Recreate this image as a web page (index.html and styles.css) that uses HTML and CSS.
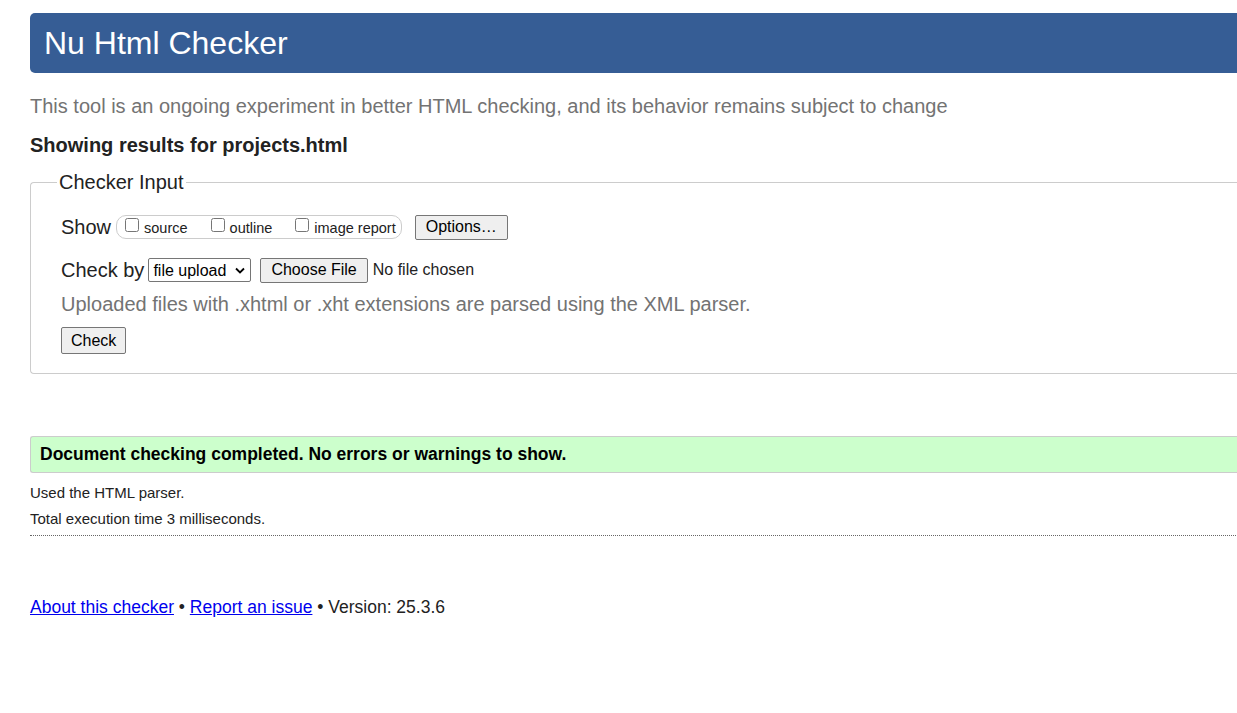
FILE: index.html
```html
<!DOCTYPE html>
<html lang="en">
<head>
<meta charset="utf-8">
<title>Showing results for projects.html - Nu Html Checker</title>
<link rel="stylesheet" href="styles.css">
</head>
<body>
<div class="page">
  <h1 class="banner">Nu Html Checker</h1>
  <p class="intro">This tool is an ongoing experiment in better HTML checking, and its behavior remains subject to change</p>
  <p class="showing">Showing results for projects.html</p>
  <fieldset class="input-box">
    <legend class="input-legend">Checker Input</legend>
    <div class="row">
      <span class="row-label">Show</span>
      <span class="show-group">
        <label class="opt"><input type="checkbox"> source</label>
        <label class="opt"><input type="checkbox"> outline</label>
        <label class="opt"><input type="checkbox"> image report</label>
      </span>
      <button class="btn btn-options" type="button">Options…</button>
    </div>
    <div class="row row-check">
      <span class="row-label">Check by</span>
      <span class="sel-wrap">
        <select class="sel"><option>file upload</option></select>
        <svg class="sel-arrow" width="10" height="7" viewBox="0 0 10 7" aria-hidden="true"><path d="M1 1.5 L5 5.5 L9 1.5" fill="none" stroke="#000" stroke-width="1.8"/></svg>
      </span>
      <button class="btn btn-file" type="button">Choose File</button>
      <span class="nofile">No file chosen</span>
    </div>
    <p class="hint">Uploaded files with .xhtml or .xht extensions are parsed using the XML parser.</p>
    <button class="btn btn-check" type="button">Check</button>
  </fieldset>
  <p class="success">Document checking completed. No errors or warnings to show.</p>
  <p class="meta">Used the HTML parser.</p>
  <p class="meta">Total execution time 3 milliseconds.</p>
  <hr class="sep">
  <p class="footer"><a href="#">About this checker</a> • <a href="#">Report an issue</a> • Version: 25.3.6</p>
</div>
</body>
</html>
```

FILE: styles.css
```css
html, body {
  margin: 0;
  padding: 0;
  overflow: hidden;
  background: #fff;
}
body {
  font-family: "Liberation Sans", Arial, sans-serif;
  color: #222;
}
.page {
  width: 1400px;
  padding: 13px 0 0 30px;
}
.banner {
  margin: 0;
  height: 60px;
  line-height: 60px;
  background: #365d95;
  color: #fff;
  font-weight: normal;
  font-size: 32px;
  padding-left: 14px;
  border-radius: 5px 0 0 5px;
}
.intro {
  margin: 21px 0 0;
  font-size: 20px;
  line-height: 24px;
  color: #737373;
}
.showing {
  margin: 15px 0 0;
  font-size: 20px;
  line-height: 24px;
  font-weight: bold;
  color: #222;
}
.input-box {
  margin: 14px 0 0;
  border: 1px solid #ccc;
  border-radius: 4px 0 0 4px;
  border-right: none;
  padding: 10px 30px 19px 30px;
  min-width: 0;
}
.input-legend {
  font-size: 20px;
  padding: 0 2px;
  margin-left: -4px;
  color: #222;
}
.row {
  display: flex;
  align-items: center;
  margin-top: 10px;
  height: 26px;
}
.row-check {
  margin-top: 17px;
}
.row-label {
  font-size: 20px;
  margin-right: 5px;
  color: #222;
}
.show-group {
  display: inline-flex;
  align-items: center;
  border: 1px solid #ccc;
  border-radius: 10px;
  height: 22px;
  padding: 0 5px 0 8px;
  gap: 23px;
}
.opt {
  font-size: 14.5px;
  display: inline-flex;
  align-items: center;
  color: #222;
  position: relative;
  top: 1px;
}
.opt input {
  margin: 0 5px 0 0;
  width: 14px;
  height: 14px;
  position: relative;
  top: -3px;
}
.btn {
  font-family: "Liberation Sans", Arial, sans-serif;
  font-size: 16px;
  color: #000;
  background: #efefef;
  border: 1px solid #767676;
  border-radius: 2px;
  padding: 0 9px;
  height: 25px;
}
.btn-options {
  margin-left: 13px;
  padding: 0 10px;
}
.sel-wrap {
  position: relative;
  display: inline-flex;
  margin-left: -1px;
}
.sel {
  -webkit-appearance: none;
  appearance: none;
  font-family: "Liberation Sans", Arial, sans-serif;
  font-size: 16px;
  height: 24px;
  width: 103px;
  padding: 0 0 0 4px;
  color: #000;
  background: #fff;
  border: 1px solid #767676;
  border-radius: 2px;
}
.sel-arrow {
  position: absolute;
  right: 6px;
  top: 9px;
  pointer-events: none;
}
.btn-file {
  margin-left: 9px;
  padding: 0 10px;
}
.nofile {
  font-size: 16px;
  margin-left: 5px;
  color: #222;
}
.hint {
  margin: 9px 0 0;
  font-size: 20px;
  line-height: 24px;
  color: #737373;
}
.btn-check {
  margin-top: 11px;
  height: 27px;
  padding: 0 9px;
}
.success {
  margin: 62px 0 0;
  background: #ccffcc;
  border: 1px solid #ccc;
  border-right: none;
  border-radius: 3px 0 0 3px;
  height: 35px;
  line-height: 35px;
  padding-left: 9px;
  font-size: 17.5px;
  font-weight: bold;
  color: #000;
}
.meta {
  margin: 11px 0 0;
  font-size: 15px;
  line-height: 17px;
  color: #222;
}
.meta + .meta {
  margin-top: 9px;
}
.sep {
  margin: 8px 0 0;
  border: none;
  border-top: 1px dotted #666;
  height: 0;
}
.footer {
  margin: 61px 0 0;
  font-size: 17.5px;
  line-height: 20px;
  color: #222;
}
.footer a {
  color: #0000ee;
}
```
